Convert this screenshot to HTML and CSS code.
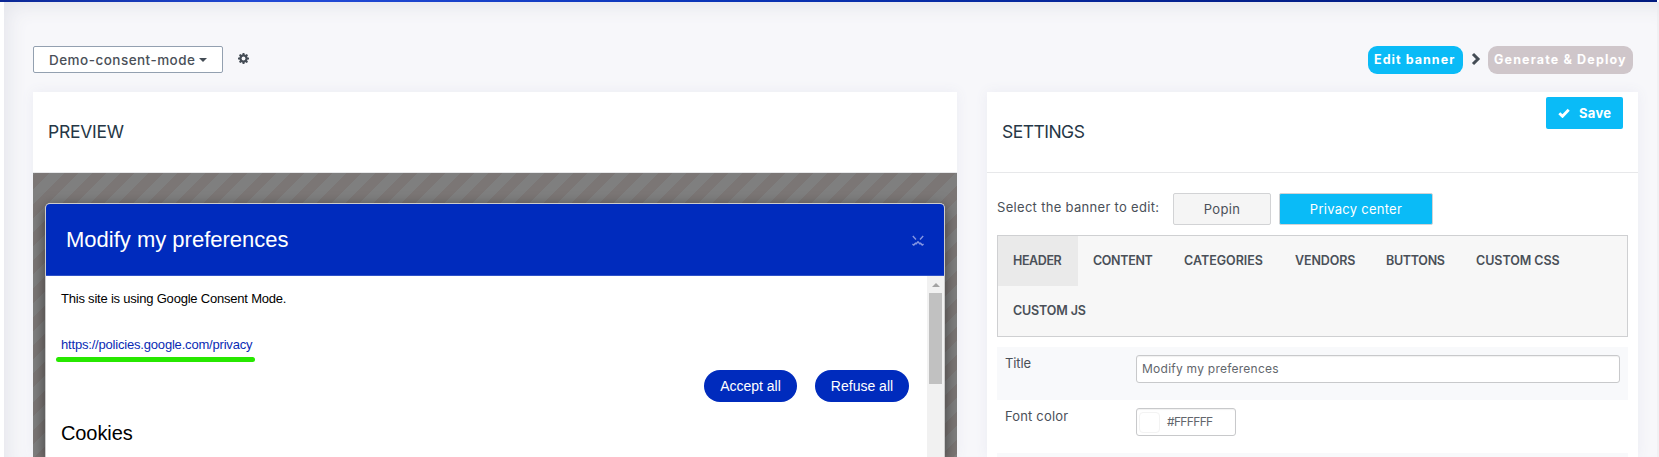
FILE: index.html
```html
<!DOCTYPE html>
<html lang="en">
<head>
<meta charset="utf-8">
<title>Demo-consent-mode</title>
<link rel="stylesheet" href="styles.css">
</head>
<body>
<div class="topbar"></div>
<main class="page">
  <div class="toolbar">
    <button class="picker"><span class="picker-name">Demo-consent-mode</span><span class="caret"></span></button>
    <svg class="gear" viewBox="0 0 22 22"><g fill="#444c55"><circle cx="11" cy="11" r="8.3"/><rect x="9" y="0" width="4" height="22" rx="1"/><rect x="0" y="9" width="22" height="4" rx="1"/><rect x="9" y="0" width="4" height="22" rx="1" transform="rotate(45 11 11)"/><rect x="9" y="0" width="4" height="22" rx="1" transform="rotate(-45 11 11)"/></g><circle cx="11" cy="11" r="3.8" fill="#f7f7fa"/></svg>
    <div class="steps">
      <span class="step step-on">Edit banner</span>
      <svg class="chevron" viewBox="0 0 10 14"><path d="M2 2l5 5-5 5" fill="none" stroke="#444c55" stroke-width="3"/></svg>
      <span class="step step-off">Generate &amp; Deploy</span>
    </div>
  </div>
  <div class="columns">
    <section class="card preview">
      <header class="card-head"><h2 class="preview-title">PREVIEW</h2></header>
      <div class="stage">
        <div class="modal">
          <div class="modal-head">
            <span class="modal-title">Modify my preferences</span>
            <svg class="close" viewBox="0 0 12 11"><path d="M.8 1l3.2 3.4M11.2 1L8 4.4M.4 9.2l1.4.8 1.6-1.8.8.6L6 6.8l1.8 2 .8-.6 1.6 1.8 1.4-.8" fill="none" stroke="#8496e2" stroke-width="1.4"/></svg>
          </div>
          <div class="modal-body">
            <div class="modal-content">
              <p class="intro">This site is using Google Consent Mode.</p>
              <a class="policy">https://policies.google.com/privacy</a>
              <div class="marker"></div>
              <div class="choices"><button class="pill accept">Accept all</button><button class="pill refuse">Refuse all</button></div>
              <h3 class="cookies">Cookies</h3>
            </div>
            <div class="scrollbar"><div class="arrow"></div><div class="thumb"></div></div>
          </div>
        </div>
      </div>
    </section>
    <section class="card settings">
      <header class="card-head">
        <h2 class="settings-title">SETTINGS</h2>
        <button class="save"><svg class="check" viewBox="0 0 12 10"><path d="M1.3 5.2l3.2 3.1 6.2-6.5" fill="none" stroke="#fff" stroke-width="2.8"/></svg><span>Save</span></button>
      </header>
      <div class="settings-body">
        <div class="select-row">
          <span class="select-label">Select the banner to edit:</span>
          <button class="choice popin">Popin</button>
          <button class="choice privacy">Privacy center</button>
        </div>
        <nav class="tabs">
          <span class="tab tab-header">HEADER</span><span class="tab tab-content">CONTENT</span><span class="tab tab-categories">CATEGORIES</span><span class="tab tab-vendors">VENDORS</span><span class="tab tab-buttons">BUTTONS</span><span class="tab tab-css">CUSTOM CSS</span><span class="tab tab-js">CUSTOM JS</span>
        </nav>
        <div class="row striped"><label class="title-label">Title</label><div class="field text-field">Modify my preferences</div></div>
        <div class="row"><label class="color-label">Font color</label><div class="field color-field"><span class="swatch"></span>#FFFFFF</div></div>
        <div class="row row-next striped"></div>
      </div>
    </section>
  </div>
</main>
</body>
</html>
```

FILE: styles.css
```css
* { box-sizing: border-box; }
body {
  margin: 0;
  height: 457px;
  overflow: hidden;
  background: #fff;
  color: #4a5058;
  font: 13px/20px Inter, "Open Sans", sans-serif;
}
button { font: inherit; color: inherit; border: 0; padding: 0; margin: 0; white-space: nowrap; }
h2, h3, p { margin: 0; font-weight: 400; }

.topbar {
  height: 2px;
  margin-right: 2px;
  background: linear-gradient(90deg, #0b2795 0, #2149d4 250px, #2149d4 330px, #0b35b8 700px, #04208c 1240px, #001a80 100%);
}
.page {
  height: 455px;
  margin-left: 4px;
  padding: 44px 21px 0 29px;
  background: #f7f7fa;
  box-shadow: inset 10px 10px 20px -6px #e4e5eb, inset -2px 0 0 #f1f1f3;
}
.toolbar { display: flex; height: 46px; }
.picker {
  display: flex;
  align-items: center;
  width: 190px;
  height: 27px;
  padding-left: 15px;
  border: 1px solid #93a0b0;
  border-radius: 2px;
  background: #fff;
  font-size: 13.5px;
  font-weight: 500;
}
.picker-name { letter-spacing: .47px; }
.caret { margin-left: 4px; border: 4px solid transparent; border-top-color: #444c55; border-bottom: 0; }
.gear { width: 11px; height: 11px; margin: 7px 0 0 15px; }
.steps { display: flex; margin-left: auto; padding-right: 5px; }
.step {
  height: 28px;
  border-radius: 9px;
  padding-left: 6px;
  color: #fff;
  font-size: 12.5px;
  font-weight: 700;
  line-height: 28px;
  white-space: nowrap;
}
.step-on { width: 95px; background: #0abbf7; letter-spacing: 1.05px; }
.step-off { width: 145px; background: #cfc6ca; letter-spacing: 1.15px; }
.chevron { width: 10px; height: 14px; margin: 6px 7px 0 8px; }

.columns { display: grid; grid-template-columns: 924px 651px; gap: 30px; height: 365px; }
.card { background: #fff; box-shadow: 0 0 12px #eaebf3; }
.card-head {
  display: flex;
  height: 81px;
  padding: 0 15px;
  border-bottom: 1px solid #e7e8ea;
  color: #263746;
  font-size: 17.5px;
  line-height: 80px;
}
.preview-title, .settings-title { font-size: inherit; }
.preview-title { letter-spacing: -.25px; }
.settings-title { letter-spacing: -.52px; }
.stage {
  height: 284px;
  padding: 30px 12px 0;
  overflow: hidden;
  background: repeating-linear-gradient(135deg, #7f7f7f 0 2px, #7b7675 2px 12px, #7f7f7f 12px 20px);
}
.modal {
  height: 254px;
  border: 1px solid #ccc;
  border-bottom: 0;
  border-radius: 5px 5px 0 0;
  overflow: hidden;
  background: #fff;
  box-shadow: 0 4px 14px rgba(0, 0, 0, .5);
  font-family: "Liberation Sans", Arial, sans-serif;
}
.modal-head {
  display: flex;
  justify-content: space-between;
  height: 72px;
  padding: 0 20px;
  border-bottom: 1px solid #2f52c8;
  background: #002bbd;
  color: #fff;
}
.modal-title { font-size: 22px; line-height: 72px; }
.close { width: 12px; height: 11px; margin-top: 31px; }
.modal-body { display: flex; height: 181px; }
.modal-content { flex: 1; padding: 13px 18px 0 15px; color: #000; }
.intro { height: 46px; letter-spacing: -.21px; }
.policy { display: block; height: 22px; color: #0a2bb4; letter-spacing: -.19px; }
.marker { width: 199px; height: 5px; margin-left: -5px; border-radius: 3px; background: #27e800; }
.choices { display: flex; justify-content: flex-end; gap: 18px; margin-top: 8px; }
.pill { height: 32px; border-radius: 16px; background: #002bbd; color: #fff; font-size: 14px; }
.accept { width: 93px; }
.refuse { width: 94px; }
.cookies { margin-top: 16px; font-size: 20px; line-height: 30px; letter-spacing: -.1px; }
.scrollbar { width: 17px; padding: 7px 2px 0; background: #f1f1f1; }
.arrow { width: 8px; height: 4px; margin: 0 auto 6px 3px; border: 4px solid transparent; border-top: 0; border-bottom-color: #a3a3a3; }
.thumb { height: 91px; background: #c1c1c1; }

.save {
  display: flex;
  align-items: center;
  gap: 9px;
  width: 77px;
  height: 32px;
  margin: 5px 0 0 auto;
  padding-left: 12px;
  border-radius: 2px;
  background: #0abbf7;
  color: #fff;
  font-size: 13px;
  font-weight: 700;
  line-height: 32px;
  letter-spacing: .3px;
}
.check { width: 12px; height: 10px; }
.settings-body { padding: 20px 10px 0; }
.select-row { display: flex; height: 42px; }
.select-label { width: 176px; padding-top: 4px; letter-spacing: .31px; white-space: nowrap; }
.choice { height: 32px; padding-bottom: 1px; border: 1px solid #d2d3d5; border-radius: 2px; }
.popin { width: 98px; margin-right: 8px; background: #f5f5f5; letter-spacing: .3px; }
.privacy { width: 154px; background: #0abbf7; color: #fff; letter-spacing: .27px; }
.tabs {
  display: flex;
  flex-wrap: wrap;
  align-content: flex-start;
  height: 102px;
  border: 1px solid #cfd0d2;
  background: #f7f7f7;
  font-size: 12.5px;
  font-weight: 600;
}
.tab { height: 50px; padding-left: 15px; line-height: 49px; white-space: nowrap; }
.tab-header { width: 80px; background: #eaeaea; letter-spacing: -.4px; }
.tab-content { width: 91px; letter-spacing: -.35px; }
.tab-categories { width: 111px; letter-spacing: 0; }
.tab-vendors { width: 91px; letter-spacing: -.13px; }
.tab-buttons { width: 90px; letter-spacing: -.3px; }
.tab-css { width: 160px; letter-spacing: -.05px; }
.tab-js { width: 110px; letter-spacing: -.15px; }
.row { display: flex; height: 53px; padding: 8px; }
.row-next { height: 4px; padding: 0; }
.tabs + .row { margin-top: 10px; }
.striped { background: #f8f9fb; }
.row label { width: 131px; line-height: 17px; }
.title-label { letter-spacing: -.1px; }
.color-label { letter-spacing: .16px; }
.field {
  display: flex;
  align-items: center;
  height: 28px;
  border: 1px solid #c8c9cb;
  border-radius: 3px;
  background: #fff;
  box-shadow: inset 0 1px 1px rgba(0, 0, 0, .06);
  color: #62666c;
  font-size: 12px;
}
.text-field { width: 484px; padding-left: 5px; letter-spacing: .25px; }
.color-field { width: 100px; padding-left: 2px; letter-spacing: -.66px; }
.swatch { width: 21px; height: 21px; margin-right: 7px; border: 1px solid #f3f3f3; border-radius: 4px; }
```
